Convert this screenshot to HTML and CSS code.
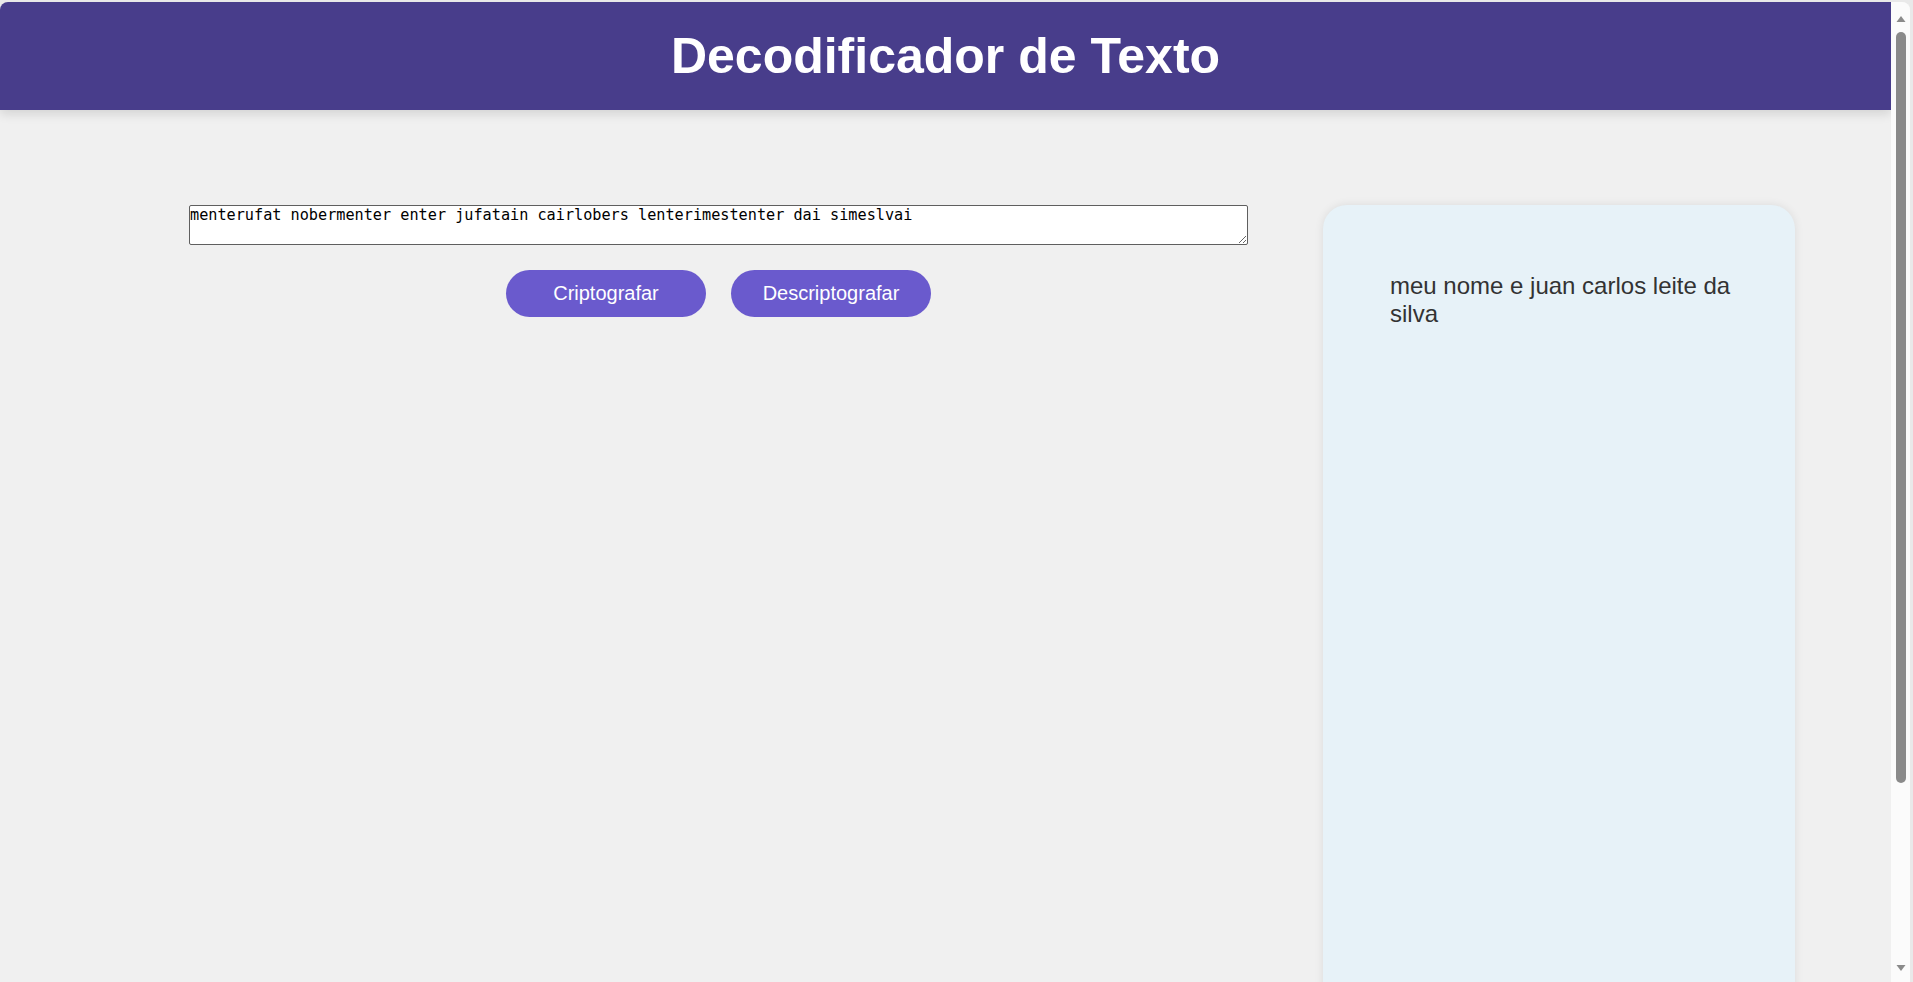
FILE: index.html
```html
<!DOCTYPE html>
<html lang="pt-BR">
<head>
<meta charset="utf-8">
<title>Decodificador de Texto</title>
<link rel="stylesheet" href="styles.css">
</head>
<body>
<div class="window">
  <div class="page">
    <header class="header">
      <h1 class="title">Decodificador de Texto</h1>
    </header>
    <main class="main">
      <section class="input-col">
        <textarea class="input" spellcheck="true">menterufat nobermenter enter jufatain cairlobers lenterimestenter dai simeslvai</textarea>
        <div class="actions">
          <button class="btn">Criptografar</button>
          <button class="btn">Descriptografar</button>
        </div>
      </section>
      <aside class="output-card">
        <p class="output-text">meu nome e juan carlos leite da silva</p>
      </aside>
    </main>
  </div>
  <div class="scrollbar">
    <svg class="arrow arrow-up" width="10" height="8" viewBox="0 0 10 8"><path d="M5 1 L9.5 7 L0.5 7 Z" fill="#8a8a8a"/></svg>
    <div class="thumb"></div>
    <div class="track-rest"></div>
    <svg class="arrow arrow-down" width="10" height="8" viewBox="0 0 10 8"><path d="M0.5 1 L9.5 1 L5 7 Z" fill="#8a8a8a"/></svg>
  </div>
</div>
</body>
</html>
```

FILE: styles.css
```css
* { box-sizing: border-box; }

html, body {
  margin: 0;
  padding: 0;
  height: 982px;
  overflow: hidden;
  background: #e9e9e9;
}

.window {
  display: flex;
  height: 980px;
  margin: 2px 3px 0 0;
  border-radius: 8px 8px 0 0;
  overflow: hidden;
  background: #f0f0f0;
}

.page {
  flex: 1;
  background: #f0f0f0;
  overflow: hidden;
  font-family: "Liberation Sans", Arial, sans-serif;
}

.header {
  height: 108px;
  background: #483d8b;
  padding-top: 26px;
  box-shadow: 0 4px 10px rgba(0, 0, 0, 0.12);
  position: relative;
  z-index: 1;
}

.title {
  margin: 0;
  text-align: center;
  color: #ffffff;
  font-size: 50px;
  font-weight: bold;
  line-height: 57px;
}

.main {
  display: flex;
  align-items: flex-start;
  gap: 75px;
  padding: 95px 0 0 189px;
}

.input-col {
  width: 1059px;
  display: flex;
  flex-direction: column;
}

.input {
  width: 100%;
  height: 40px;
  padding: 1px 0 0 0;
  margin: 0;
  border: 1px solid #5f5f5f;
  border-radius: 2px;
  background: #ffffff;
  font-family: "DejaVu Sans Mono", "Liberation Mono", monospace;
  font-size: 15.2px;
  line-height: 17.5px;
  color: #000;
  resize: both;
}

.actions {
  display: flex;
  justify-content: center;
  gap: 25px;
  margin-top: 25px;
}

.btn {
  width: 200px;
  height: 47px;
  border: none;
  border-radius: 24px;
  background: #6a5acd;
  color: #ffffff;
  font-family: "Liberation Sans", Arial, sans-serif;
  font-size: 20px;
  cursor: pointer;
}

.output-card {
  width: 472px;
  height: 820px;
  background: #e7f2f8;
  border-radius: 24px;
  box-shadow: 0 0 10px rgba(0, 0, 0, 0.09);
  padding: 67px 59px 0 67px;
}

.output-text {
  margin: 0;
  font-size: 24px;
  line-height: 27.6px;
  color: #333333;
}

.scrollbar {
  width: 19px;
  background: #fbfbfb;
  display: flex;
  flex-direction: column;
  align-items: center;
  padding-top: 13px;
}

.arrow { display: block; }

.thumb {
  width: 10px;
  height: 751px;
  margin-top: 9px;
  border-radius: 5px;
  background: #8a8a8a;
}

.track-rest { flex: 1; }

.arrow-down { margin-bottom: 10px; }
```
